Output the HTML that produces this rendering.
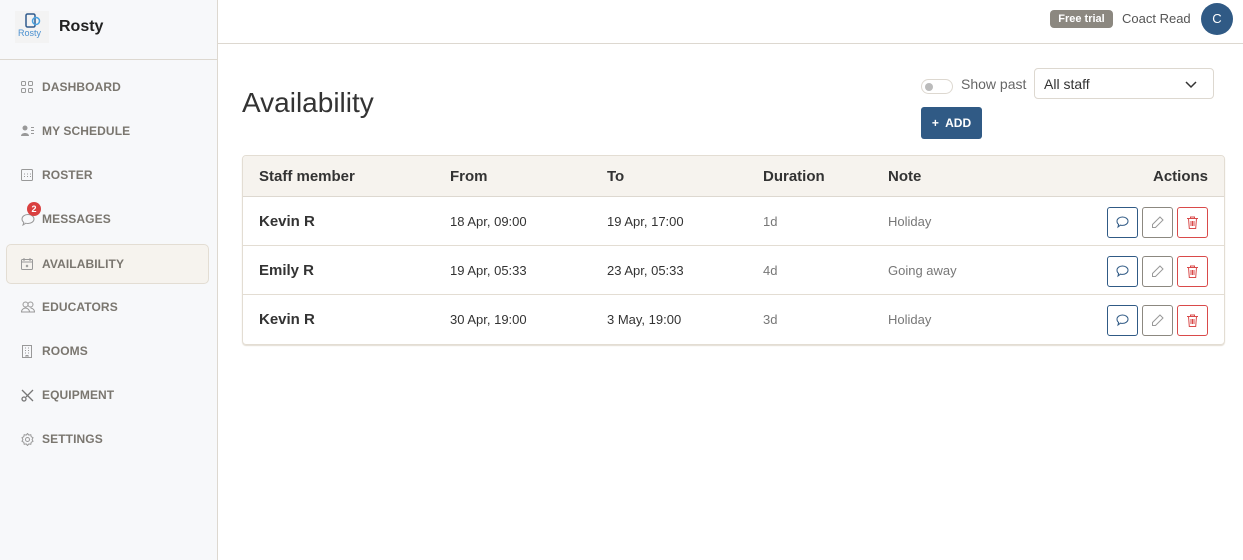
<!DOCTYPE html>
<html><head><meta charset="utf-8"><style>
*{box-sizing:border-box;margin:0;padding:0}
body{width:1243px;height:560px;overflow:hidden;font-family:"Liberation Sans",Arial,sans-serif;background:#fff;position:relative;color:#333}
.sb{position:absolute;left:0;top:0;width:218px;height:560px;background:#f7f8fa;border-right:1px solid #ddd8d0}
.logo{height:60px;border-bottom:1px solid #ddd8d0;position:relative}
.logo .img{position:absolute;left:15px;top:11px;width:34px;height:32px;background:#f3f3f3}
.logo b{position:absolute;left:59px;top:18px;font-size:16px;color:#222}
.nav{position:absolute;left:0;width:218px;height:40px;font-size:12px;font-weight:bold;color:#7a766f;letter-spacing:.1px}
.nav span{position:absolute;left:42px;top:13px}
.nav svg{position:absolute;left:21px;top:14px}
.act{left:6px;width:203px;background:#f6f3ee;border:1px solid #e3ddd3;border-radius:5px}
.act span{left:35px;top:12px}.act svg{left:14px;top:13px}
.top{position:absolute;left:218px;top:0;right:0;height:44px;border-bottom:1px solid #ddd8d0}
.badge{position:absolute;left:1050px;top:10px;width:63px;height:18px;background:#8c8880;border-radius:4px;color:#fff;font-size:11px;font-weight:bold;text-align:center;line-height:18px}
.user{position:absolute;left:1122px;top:11px;font-size:13px;color:#555}
.av{position:absolute;left:1201px;top:3px;width:32px;height:32px;border-radius:50%;background:#305a85;color:#fff;font-size:13px;text-align:center;line-height:32px}
h1{position:absolute;left:242px;top:87px;font-size:28px;font-weight:normal;color:#333}
.tg{position:absolute;left:921px;top:79px;width:32px;height:15px;border:1px solid #ddd8d0;border-radius:8px}
.tg i{position:absolute;left:3px;top:3px;width:8px;height:8px;border-radius:50%;background:#bbb}
.sp{position:absolute;left:961px;top:76px;font-size:14px;color:#666}
.sel{position:absolute;left:1034px;top:68px;width:180px;height:31px;border:1px solid #ddd8d0;border-radius:4px;font-size:14px;color:#333;padding:7px 9px}
.add{position:absolute;left:921px;top:107px;width:61px;height:32px;background:#305a85;border-radius:3px;color:#fff;font-size:12px;font-weight:bold;line-height:32px;text-align:center}
.tbl{position:absolute;left:242px;top:155px;width:983px;height:190px;border:1px solid #e3ddd3;border-radius:4px;overflow:hidden;box-shadow:0 1px 1px #e3ddd3}
.th{height:41px;background:#f6f3ee;border-bottom:1px solid #ddd8d0;position:relative;font-weight:bold;font-size:15px;color:#333}
.tr{height:49px;border-bottom:1px solid #e3ddd3;position:relative;font-size:13px;color:#333}
.tr:last-child{border-bottom:none}
.th span,.tr span{position:absolute}
.th span{top:12px}.tr span{top:17px}
.tr .n{font-weight:bold;font-size:15px;top:16px}
.tr .g{color:#777}
.b{position:absolute;top:10px;width:31px;height:31px;border:1px solid;border-radius:3px}
.b svg{position:absolute;left:7px;top:7px}
</style></head><body>
<div class="sb">
<div class="logo"><div class="img"><svg width="34" height="32"><rect x="11" y="3" width="9" height="13" rx="1.5" fill="none" stroke="#2f5a8c" stroke-width="1.5"/><circle cx="21" cy="10" r="3.5" fill="none" stroke="#4aa2e0" stroke-width="1.5"/><text x="3" y="25" font-size="9" fill="#4a90d0" font-family="Liberation Sans">Rosty</text></svg></div><b>Rosty</b></div>
<div class="nav" style="top:67px"><svg width="12" height="12" fill="none" stroke="#999"><rect x=".5" y=".5" width="4" height="4" rx="1"/><rect x="7.5" y=".5" width="4" height="4" rx="1"/><rect x=".5" y="7.5" width="4" height="4" rx="1"/><rect x="7.5" y="7.5" width="4" height="4" rx="1"/></svg><span>DASHBOARD</span></div>
<div class="nav" style="top:111px"><svg width="14" height="12" fill="#999"><circle cx="4" cy="3" r="2.5"/><path d="M0 11c0-4 8-4 8 0z"/><rect x="10" y="2" width="3" height="1"/><rect x="10" y="5" width="3" height="1"/><rect x="10" y="8" width="3" height="1"/></svg><span>MY SCHEDULE</span></div>
<div class="nav" style="top:155px"><svg width="12" height="12" fill="none" stroke="#999"><rect x=".5" y=".5" width="11" height="11" rx="1"/><path d="M3 5h1M6 5h1M9 5h1M3 7.5h1M6 7.5h1M9 7.5h1"/></svg><span>ROSTER</span></div>
<div class="nav" style="top:199px"><svg width="14" height="13" fill="none" stroke="#999" style="top:14px"><path d="M7 1.5c3.3 0 6 2 6 4.5s-2.7 4.5-6 4.5c-.8 0-1.5-.1-2.2-.3L2 12l.8-2.5C1.7 8.6 1 7.4 1 6c0-2.5 2.7-4.5 6-4.5z"/></svg><div style="position:absolute;left:27px;top:3px;width:14px;height:14px;border-radius:50%;background:#d94040;color:#fff;font-size:9px;text-align:center;line-height:14px">2</div><span>MESSAGES</span></div>
<div class="nav act" style="top:244px"><svg width="12" height="12" fill="none" stroke="#999"><rect x=".5" y="1.5" width="11" height="10" rx="1"/><path d="M3 0v3M9 0v3M.5 4h11M5 7l2 2M7 7l-2 2"/></svg><span>AVAILABILITY</span></div>
<div class="nav" style="top:287px"><svg width="14" height="12" fill="none" stroke="#999"><circle cx="4.5" cy="3.5" r="2.5"/><circle cx="9.5" cy="3.5" r="2.5"/><path d="M.5 11c0-3 3-4 4-4s4 1 4 4zM6.5 11h7c0-3-3-4-4-4"/></svg><span>EDUCATORS</span></div>
<div class="nav" style="top:331px"><svg width="12" height="13" fill="none" stroke="#999"><rect x="1.5" y=".5" width="9" height="12"/><path d="M4 3h1M7 3h1M4 5.5h1M7 5.5h1M4 8h1M7 8h1M5 12.5v-2h2v2"/></svg><span>ROOMS</span></div>
<div class="nav" style="top:375px"><svg width="13" height="13" fill="none" stroke="#777" stroke-width="1.3"><path d="M1 1l11 11M12 1L5 8"/><circle cx="3" cy="10" r="2"/></svg><span>EQUIPMENT</span></div>
<div class="nav" style="top:419px"><svg width="13" height="13" fill="none" stroke="#999"><circle cx="6.5" cy="6.5" r="2"/><path d="M6.5 .5l1.3 1.6 2-.4.4 2 1.8 1-.9 1.8.9 1.8-1.8 1-.4 2-2-.4-1.3 1.6-1.3-1.6-2 .4-.4-2-1.8-1 .9-1.8-.9-1.8 1.8-1 .4-2 2 .4z"/></svg><span>SETTINGS</span></div>
</div>
<div class="top"></div>
<div class="badge">Free trial</div><div class="user">Coact Read</div><div class="av">C</div>
<h1>Availability</h1>
<div class="tg"><i></i></div><div class="sp">Show past</div>
<div class="sel">All staff<svg width="12" height="8" style="position:absolute;right:16px;top:12px" fill="none" stroke="#333" stroke-width="1.5"><path d="M1 1l5 5 5-5"/></svg></div>
<div class="add">+&nbsp; ADD</div>
<div class="tbl">
<div class="th"><span style="left:16px">Staff member</span><span style="left:207px">From</span><span style="left:364px">To</span><span style="left:520px">Duration</span><span style="left:645px">Note</span><span style="right:16px">Actions</span></div>
<div class="tr"><span class="n" style="left:16px">Kevin R</span><span style="left:207px">18 Apr, 09:00</span><span style="left:364px">19 Apr, 17:00</span><span class="g" style="left:520px">1d</span><span class="g" style="left:645px">Holiday</span>
<div class="b" style="left:864px;border-color:#305a85"><svg width="15" height="15" fill="none" stroke="#305a85"><path d="M7.5 2c3 0 5.5 1.8 5.5 4.2S10.5 10.4 7.5 10.4c-.7 0-1.4-.1-2-.3L3 12l.6-2.6C2.600 8.600 2 7.500 2 6.2 2 3.800 4.500 2 7.5 2z"/></svg></div>
<div class="b" style="left:899px;border-color:#8c8880"><svg width="15" height="15" fill="none" stroke="#999"><path d="M10 2l3 3-7.5 7.5H2.5v-3z"/></svg></div>
<div class="b" style="left:934px;border-color:#d94a4a"><svg width="15" height="15" fill="none" stroke="#d94a4a"><path d="M2 3.5h11M5.5 3.5V2h4v1.5M3.5 3.5l.8 10h6.4l.8-10M6 6v5M7.5 6v5M9 6v5"/></svg></div></div>
<div class="tr"><span class="n" style="left:16px">Emily R</span><span style="left:207px">19 Apr, 05:33</span><span style="left:364px">23 Apr, 05:33</span><span class="g" style="left:520px">4d</span><span class="g" style="left:645px">Going away</span>
<div class="b" style="left:864px;border-color:#305a85"><svg width="15" height="15" fill="none" stroke="#305a85"><path d="M7.5 2c3 0 5.5 1.8 5.5 4.2S10.5 10.4 7.5 10.4c-.7 0-1.4-.1-2-.3L3 12l.6-2.6C2.600 8.600 2 7.500 2 6.2 2 3.800 4.500 2 7.5 2z"/></svg></div>
<div class="b" style="left:899px;border-color:#8c8880"><svg width="15" height="15" fill="none" stroke="#999"><path d="M10 2l3 3-7.5 7.5H2.5v-3z"/></svg></div>
<div class="b" style="left:934px;border-color:#d94a4a"><svg width="15" height="15" fill="none" stroke="#d94a4a"><path d="M2 3.5h11M5.5 3.5V2h4v1.5M3.5 3.5l.8 10h6.4l.8-10M6 6v5M7.5 6v5M9 6v5"/></svg></div></div>
<div class="tr"><span class="n" style="left:16px">Kevin R</span><span style="left:207px">30 Apr, 19:00</span><span style="left:364px">3 May, 19:00</span><span class="g" style="left:520px">3d</span><span class="g" style="left:645px">Holiday</span>
<div class="b" style="left:864px;border-color:#305a85"><svg width="15" height="15" fill="none" stroke="#305a85"><path d="M7.5 2c3 0 5.5 1.8 5.5 4.2S10.5 10.4 7.5 10.4c-.7 0-1.4-.1-2-.3L3 12l.6-2.6C2.600 8.600 2 7.500 2 6.2 2 3.800 4.500 2 7.5 2z"/></svg></div>
<div class="b" style="left:899px;border-color:#8c8880"><svg width="15" height="15" fill="none" stroke="#999"><path d="M10 2l3 3-7.5 7.5H2.5v-3z"/></svg></div>
<div class="b" style="left:934px;border-color:#d94a4a"><svg width="15" height="15" fill="none" stroke="#d94a4a"><path d="M2 3.5h11M5.5 3.5V2h4v1.5M3.5 3.5l.8 10h6.4l.8-10M6 6v5M7.5 6v5M9 6v5"/></svg></div></div>
</div>
</body></html>
